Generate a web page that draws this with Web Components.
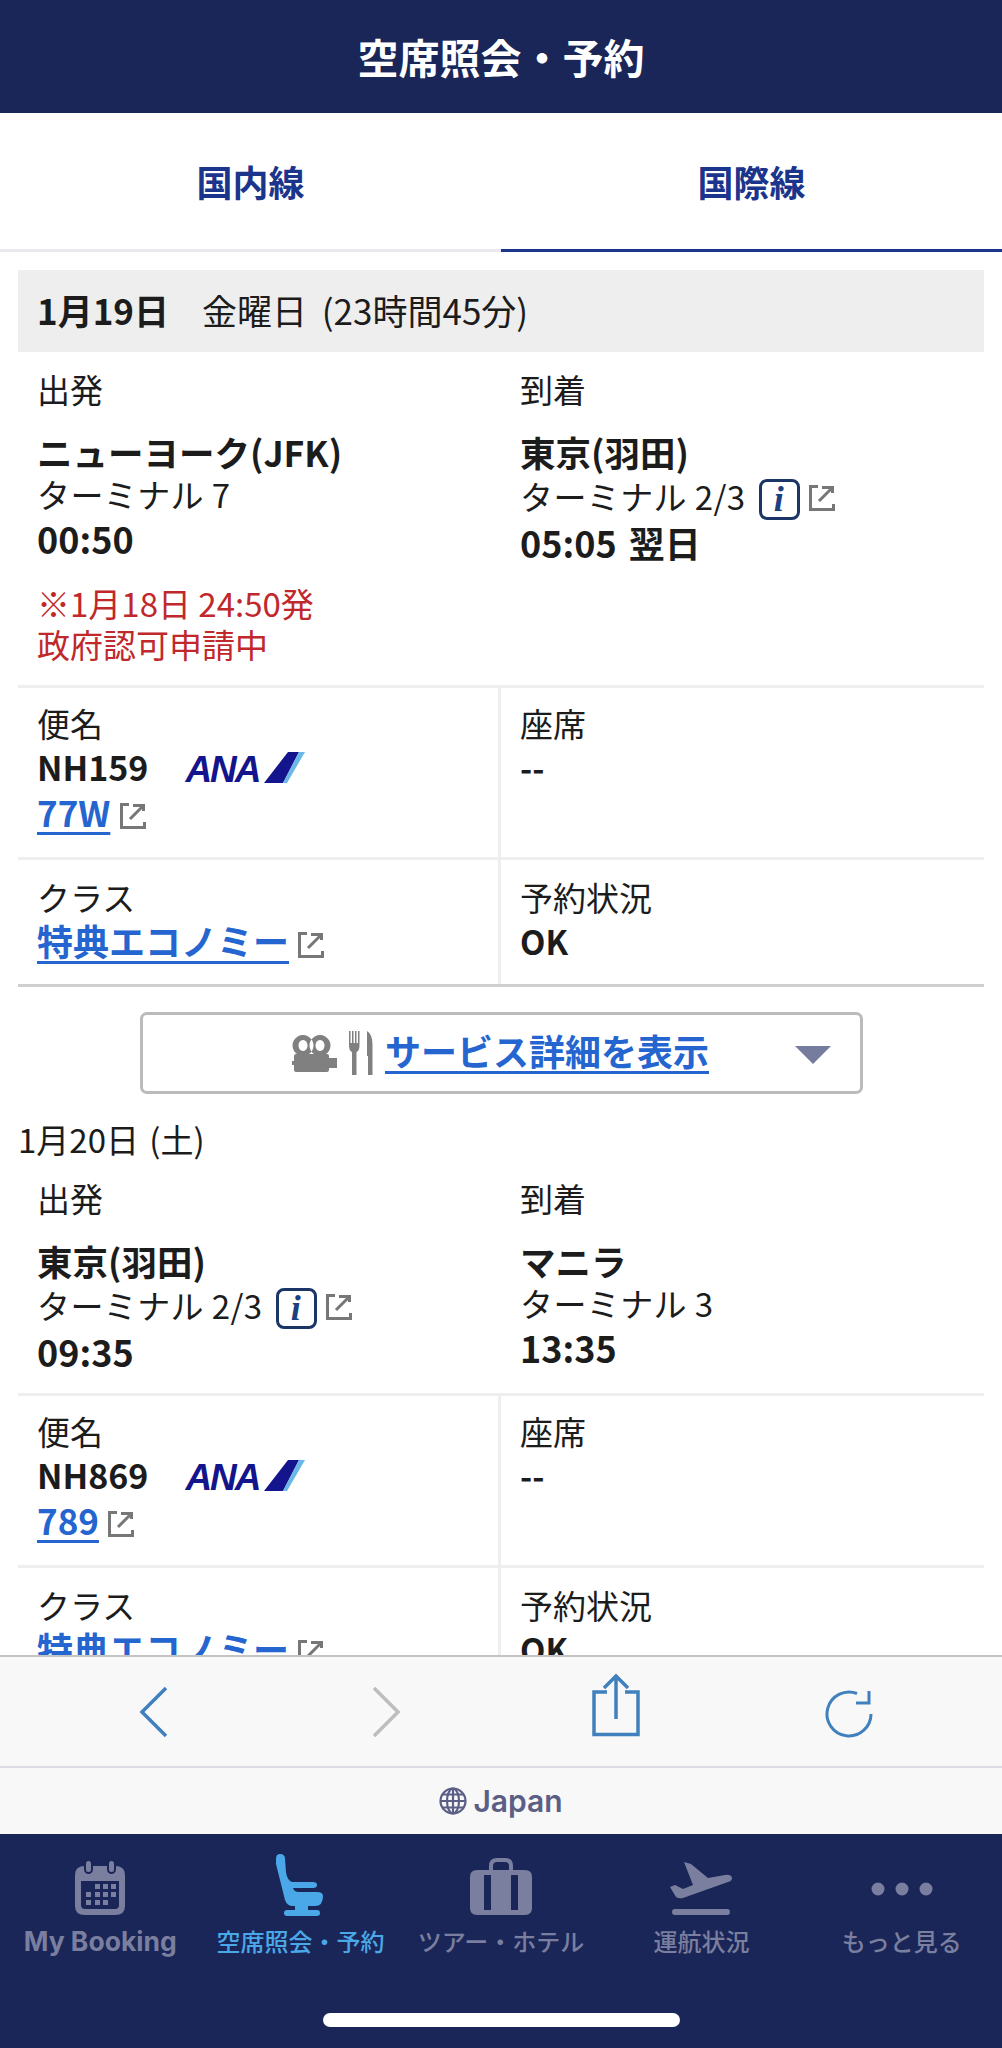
<!DOCTYPE html>
<html lang="ja">
<head>
<meta charset="utf-8">
<title>空席照会・予約</title>
<style>
  html, body { margin: 0; height: 100%; }
  body { font-family: "Noto Sans CJK JP", "Noto Sans", sans-serif; color: #1c1c1c; background: #fff; }
  #app { display: flex; flex-direction: column; height: 2048px; overflow: hidden; }
  #scroll { flex: 1; min-height: 0; overflow: hidden; padding: 0 18px; }
</style>
</head>
<body>
<div id="app">
  <app-header>空席照会・予約</app-header>
  <tab-bar></tab-bar>
  <div id="scroll">
    <date-bar day="1月19日" rest="金曜日 (23時間45分)"></date-bar>
    <route-row>
      <route-stop slot="from" label="出発" name="ニューヨーク(JFK)" terminal="ターミナル 7" time="00:50" note="※1月18日 24:50発|政府認可申請中"></route-stop>
      <route-stop slot="to" label="到着" name="東京(羽田)" terminal="ターミナル 2/3" info time="05:05 翌日"></route-stop>
    </route-row>
    <detail-grid flight="NH159" aircraft="77W"></detail-grid>
    <service-button>サービス詳細を表示</service-button>
    <plain-date>1月20日 (土)</plain-date>
    <route-row>
      <route-stop slot="from" label="出発" name="東京(羽田)" terminal="ターミナル 2/3" info time="09:35"></route-stop>
      <route-stop slot="to" label="到着" name="マニラ" terminal="ターミナル 3" time="13:35"></route-stop>
    </route-row>
    <detail-grid flight="NH869" aircraft="789"></detail-grid>
  </div>
  <browser-toolbar></browser-toolbar>
  <region-bar>Japan</region-bar>
  <bottom-nav></bottom-nav>
</div>

<script>
const NAVY = '#1a2657';

customElements.define('app-header', class extends HTMLElement{
  constructor(){
    super();
    this.attachShadow({mode:'open'}).innerHTML = `
      <style>
        :host{
          display: flex; flex: none; box-sizing: border-box; height: 113px; align-items: center; justify-content: center;
          background: ${NAVY}; color: #fff; font-size: 41px; font-weight: 700; padding-bottom: 2px;
        }
      </style>
      <slot></slot>
    `;
  }
});

customElements.define('tab-bar', class extends HTMLElement{
  constructor(){
    super();
    this.attachShadow({mode:'open'}).innerHTML = `
      <style>
        :host{ display: grid; grid-template-columns: 1fr 1fr; flex: none; height: 139px; }
        div{
          display: flex; align-items: center; justify-content: center;
          color: #1b348c; font-size: 36px; font-weight: 700;
          border-bottom: 3px solid #e8e8ee;
        }
        .on{ border-bottom-color: #1b348c; }
      </style>
      <div>国内線</div>
      <div class="on">国際線</div>
    `;
  }
});

customElements.define('date-bar', class extends HTMLElement{
  constructor(){
    super();
    this.attachShadow({mode:'open'}).innerHTML = `
      <style>
        :host{
          display: flex; align-items: center; gap: 33px; box-sizing: border-box; height: 82px; margin-top: 18px;
          padding: 0 0 3px 19px; background: #eeeeee; font-size: 35px; word-spacing: 7px;
        }
        b{ font-weight: 700; }
      </style>
      <b>${this.getAttribute('day')}</b><span>${this.getAttribute('rest')}</span>
    `;
  }
});

customElements.define('plain-date', class extends HTMLElement{
  constructor(){
    super();
    this.attachShadow({mode:'open'}).innerHTML = `
      <style>
        :host{ display: block; font-size: 33px; line-height: 40px; margin: 25px 0 2px; word-spacing: 3px; }
      </style>
      <slot></slot>
    `;
  }
});

customElements.define('ext-link', class extends HTMLElement{
  constructor(){
    super();
    this.attachShadow({mode:'open'}).innerHTML = `
      <style>
        :host{ display: inline-block; width: 28px; height: 28px; vertical-align: -3px; }
        svg{ display: block; }
      </style>
      <svg width="28" height="28" viewBox="0 0 28 28" fill="none" stroke="#777" stroke-width="3">
        <path d="M10 2.5H2.500V25.500H25.500V20"/>
        <path d="M11 17L23.500 4.500M14 3.500H24.500V9"/>
      </svg>
    `;
  }
});

customElements.define('info-badge', class extends HTMLElement{
  constructor(){
    super();
    this.attachShadow({mode:'open'}).innerHTML = `
      <style>
        :host{
          display: inline-flex; align-items: center; justify-content: center;
          box-sizing: border-box; width: 41px; height: 41px;
          border: 3px solid #1a3566; border-radius: 8px;
          color: #1a4080; font: italic 700 36px/1 "Liberation Serif", serif;
        }
      </style>
      i
    `;
  }
});

customElements.define('route-stop', class extends HTMLElement{
  constructor(){
    super();
    const note = this.getAttribute('note');
    const info = this.hasAttribute('info');
    this.attachShadow({mode:'open'}).innerHTML = `
      <style>
        :host{ display: block; }
        .label{ font-size: 33px; line-height: 44px; margin-bottom: 19px; }
        .name{ font-size: 35.500px; font-weight: 700; line-height: 43px; }
        .term{ font-size: 33px; line-height: 43px; letter-spacing: .4px; white-space: nowrap; }
        .term.has-icons{ display: flex; align-items: center; height: 47px; line-height: 47px; }
        .term span{ margin-right: 1px; }
        .term info-badge{ margin: 5px 0 0 12px; }
        .term ext-link{ margin: 3px 0 0 8px; }
        .time{ font-size: 36px; font-weight: 700; line-height: 44px; word-spacing: 4px; }
        .note{ color: #c0282c; font-size: 33px; line-height: 41px; margin-top: 23px; }
      </style>
      <div class="label">${this.getAttribute('label')}</div>
      <div class="name">${this.getAttribute('name')}</div>
      <div class="term${info ? ' has-icons' : ''}"><span>${this.getAttribute('terminal')}</span>${info ? '<info-badge></info-badge><ext-link></ext-link>' : ''}</div>
      <div class="time">${this.getAttribute('time')}</div>
      ${note ? `<div class="note">${note.replace('|','<br>')}</div>` : ''}
    `;
  }
});

customElements.define('route-row', class extends HTMLElement{
  constructor(){
    super();
    this.attachShadow({mode:'open'}).innerHTML = `
      <style>
        :host{ display: grid; grid-template-columns: 483px 1fr; padding-top: 15px; padding-bottom: 20px; }
        ::slotted(route-stop){ padding-left: 19px; }
      </style>
      <slot name="from"></slot>
      <slot name="to"></slot>
    `;
  }
});

customElements.define('ana-logo', class extends HTMLElement{
  constructor(){
    super();
    this.attachShadow({mode:'open'}).innerHTML = `
      <style>
        :host{ display: inline-flex; align-items: flex-end; height: 32px; color: #14148c; }
        span{ font: italic 700 37px/32px "Liberation Sans", sans-serif; letter-spacing: -2px; height: 32px; margin-bottom: -3px; }
        svg{ display: block; margin-left: 4px; }
      </style>
      <span>ANA</span>
      <svg width="41" height="31" viewBox="0 0 41 31">
        <path d="M24 0H35L19 31H0Z" fill="#14148c"/>
        <path d="M35 0H41L23 31H19Z" fill="#6ab8e8"/>
      </svg>
    `;
  }
});

customElements.define('detail-grid', class extends HTMLElement{
  constructor(){
    super();
    this.attachShadow({mode:'open'}).innerHTML = `
      <style>
        :host{
          display: grid; grid-template-columns: 483px 1fr;
          border-top: 3px solid #eeeeee; border-bottom: 3px solid #cfcfcf;
        }
        .cell{ padding: 13px 0 21px 19px; font-size: 33px; line-height: 44px; }
        .l{ border-right: 3px solid #eeeeee; }
        .row2{ border-top: 3px solid #eeeeee; padding-top: 15px; padding-bottom: 19px; }
        .row2 .ac{ margin-top: -2px; }
        .flight{ display: flex; align-items: center; gap: 37px; font-size: 34px; font-weight: 700; }
        .val{ font-size: 33px; font-weight: 700; }
        a{ color: #2565cf; text-decoration: underline; text-underline-offset: 5px; text-decoration-thickness: 3px; font-size: 36px; font-weight: 700; }
        a.code{ font-size: 35px; }
        ext-link{ margin-left: 1px; }
        .ac{ line-height: 46px; }
      </style>
      <div class="cell l">
        便名
        <div class="flight">${this.getAttribute('flight')}<ana-logo></ana-logo></div>
        <div class="ac"><a class="code">${this.getAttribute('aircraft')}</a> <ext-link></ext-link></div>
      </div>
      <div class="cell">座席<div class="val">--</div></div>
      <div class="cell l row2">クラス<div class="ac"><a>特典エコノミー</a> <ext-link></ext-link></div></div>
      <div class="cell row2">予約状況<div class="val">OK</div></div>
    `;
  }
});

customElements.define('service-button', class extends HTMLElement{
  constructor(){
    super();
    this.attachShadow({mode:'open'}).innerHTML = `
      <style>
        :host{
          display: flex; align-items: center; box-sizing: border-box; position: relative;
          width: 723px; height: 82px; margin: 25px auto 0; justify-content: center;
          border: 3px solid #bbbbbb; border-radius: 7px; background: #fff;
          font-size: 36px; font-weight: 700;
        }
        .icons{ display: flex; align-items: center; gap: 11px; margin-right: 12px; margin-left: -1px; }
        a{ color: #2565cf; text-decoration: underline; text-underline-offset: 5px; text-decoration-thickness: 3px; margin-bottom: 6px; }
        .caret{ position: absolute; right: 29px; top: 31px; width: 0; height: 0;
          border-left: 18px solid transparent; border-right: 18px solid transparent; border-top: 18px solid #767c9e; }
      </style>
      <span class="icons">
        <svg width="46" height="37" viewBox="0 0 46 37" fill="#808080">
          <path fill-rule="evenodd" d="M11 0a10.500 10.500 0 1 1-.01 0ZM11 5a4.500 5.500 0 1 0 .01 0ZM28 0a10.500 10.500 0 1 1-.01 0ZM28 5a4.500 5.500 0 1 0 .01 0Z"/>
          <path d="M4 19H35Q37 19 37 21V23H45V33H37V35Q37 37 35 37H4Q2 37 2 35V30H0V26H2V21Q2 19 4 19Z"/>
        </svg>
        <svg width="24" height="44" viewBox="0 0 24 44" fill="#808080">
          <path d="M0 0H1.500V12H3V0H4.500V12H6V0H7.500V12H9V0H10.500V14Q10.500 20 7.500 21V44H3V21Q0 20 0 14Z"/>
          <path d="M18 0Q23.500 3 23.500 14V44H19V25H18Z"/>
        </svg>
      </span>
      <a><slot></slot></a>
      <span class="caret"></span>
    `;
  }
});

customElements.define('browser-toolbar', class extends HTMLElement{
  constructor(){
    super();
    this.attachShadow({mode:'open'}).innerHTML = `
      <style>
        :host{
          display: grid; grid-template-columns: repeat(4, 1fr); flex: none; height: 113px; box-sizing: border-box;
          padding: 0 36px 0 38px;
          background: #f8f8f8; border-top: 2px solid #c4c4c4; border-bottom: 2px solid #dcdce6;
        }
        div{ display: flex; align-items: center; justify-content: center; }
        svg{ display: block; fill: none; stroke: #3f80bd; stroke-width: 3; }
      </style>
      <div>
        <svg width="30" height="52" viewBox="0 0 30 52"><path d="M27 2L3 26L27 50" stroke-width="3.500"/></svg>
      </div>
      <div>
        <svg width="30" height="52" viewBox="0 0 30 52" style="stroke:#bdbdbd"><path d="M3 2L27 26L3 50" stroke-width="3.500"/></svg>
      </div>
      <div style="padding:0 4px 12px 0">
        <svg width="48" height="63" viewBox="0 0 48 63"><path d="M15 18H2V60.500H46V18H33M24 45V3M12 14L24 2L36 14" stroke-width="3.500"/></svg>
      </div>
      <div style="padding:2px 2px 0 0">
        <svg width="48" height="50" viewBox="0 0 48 50"><path d="M32 5.500A22 22 0 1 0 46 26"/><path d="M44 3V15H31"/></svg>
      </div>
    `;
  }
});

customElements.define('region-bar', class extends HTMLElement{
  constructor(){
    super();
    this.attachShadow({mode:'open'}).innerHTML = `
      <style>
        :host{
          display: flex; flex: none; align-items: center; justify-content: center; gap: 6px; height: 66px;
          background: #f8f8f8; color: #5b5f86; font: 600 30px Inter, sans-serif;
        }
      </style>
      <svg width="28" height="28" viewBox="0 0 28 28" fill="none" stroke="#5b5f86" stroke-width="2.200">
        <circle cx="14" cy="14" r="12.500"/>
        <ellipse cx="14" cy="14" rx="6" ry="12.500"/>
        <path d="M14 1.500V26.500M1.500 14H26.500M3.500 7.500H24.500M3.500 20.500H24.500"/>
      </svg>
      <slot></slot>
    `;
  }
});

customElements.define('nav-item', class extends HTMLElement{
  constructor(){
    super();
    this.attachShadow({mode:'open'}).innerHTML = `
      <style>
        :host{ display: flex; flex-direction: column; align-items: center; color: #7a7f9f; }
        :host([active]){ color: #4aa8e8; }
        .icon{ display: flex; align-items: flex-end; justify-content: center; height: 82px; }
        .text{ margin-top: 7px; font-size: 24px; font-weight: 500; line-height: 36px; white-space: nowrap; }
        :host([latin]) .text{ font: 700 26.500px/36px Inter, sans-serif; }
      </style>
      <div class="icon"><slot name="icon"></slot></div>
      <div class="text"><slot></slot></div>
    `;
  }
});

customElements.define('bottom-nav', class extends HTMLElement{
  constructor(){
    super();
    this.attachShadow({mode:'open'}).innerHTML = `
      <style>
        :host{ display: flex; flex-direction: column; flex: none; height: 214px; background: ${NAVY}; position: relative; }
        .items{ display: grid; grid-template-columns: repeat(5, 1fr); }
        .home{ position: absolute; left: 323px; top: 179px; width: 357px; height: 14px; border-radius: 7px; background: #fff; }
        svg{ display: block; }
      </style>
      <div class="items">
        <nav-item latin>
          <svg slot="icon" width="50" height="56" viewBox="0 0 50 56" fill="#7a7f9f">
            <path fill-rule="evenodd" d="M10 6H40Q50 6 50 15V46Q50 55 40 55H10Q0 55 0 46V15Q0 6 10 6ZM6 21V45Q6 49 10 49H40Q44 49 44 45V21Z"/>
            <rect x="10" y="0" width="7" height="13" rx="3.500" stroke="${NAVY}" stroke-width="2"/>
            <rect x="33" y="0" width="7" height="13" rx="3.500" stroke="${NAVY}" stroke-width="2"/>
            <path d="M20 24h5v5h-5zM28 24h5v5h-5zM36 24h5v5h-5zM11 32h5v5h-5zM20 32h5v5h-5zM28 32h5v5h-5zM36 32h5v5h-5zM11 40h5v5h-5zM20 40h5v5h-5zM28 40h5v5h-5z"/>
          </svg>
          My Booking
        </nav-item>
        <nav-item active>
          <svg slot="icon" width="50" height="62" viewBox="0 0 50 62" fill="#4aa8e8" style="transform:translateX(-1px)">
            <path d="M5 0Q10 0 10 5L11 18Q12 26 17 28H38Q42 28 42 31Q42 34 38 34H18Q19 38 24 38H42Q48 38 48 42Q48 52 40 52H18Q12 52 10 46L1 10V5Q1 0 5 0Z"/>
            <rect x="20" y="51" width="13" height="6"/>
            <rect x="9" y="56" width="36" height="6" rx="3"/>
          </svg>
          空席照会・予約
        </nav-item>
        <nav-item>
          <svg slot="icon" width="62" height="58" viewBox="0 0 62 58" fill="#7a7f9f">
            <path d="M21 14V8Q21 2 27 2H35Q41 2 41 8V14" fill="none" stroke="#7a7f9f" stroke-width="4"/>
            <path fill-rule="evenodd" d="M7 12H55Q62 12 62 19V50Q62 57 55 57H7Q0 57 0 50V19Q0 12 7 12ZM14 17V52H21V17ZM41 17V52H48V17Z"/>
          </svg>
          ツアー・ホテル
        </nav-item>
        <nav-item>
          <svg slot="icon" width="62" height="54" viewBox="0 0 62 54" fill="#7a7f9f">
            <path d="M14 0L21 2L38 16L55 13Q61 12 62 16Q62 19 58 20L13 36Q9 37 6 35L0 25L5 23L13 27L23 23Z"/>
            <rect x="2" y="47" width="58" height="6" rx="3"/>
          </svg>
          運航状況
        </nav-item>
        <nav-item>
          <svg slot="icon" width="62" height="14" viewBox="0 0 62 14" fill="#7a7f9f" style="margin-bottom:20px">
            <circle cx="7" cy="7" r="6.500"/><circle cx="31" cy="7" r="6.500"/><circle cx="55" cy="7" r="6.500"/>
          </svg>
          もっと見る
        </nav-item>
      </div>
      <div class="home"></div>
    `;
  }
});
</script>
</body>
</html>
